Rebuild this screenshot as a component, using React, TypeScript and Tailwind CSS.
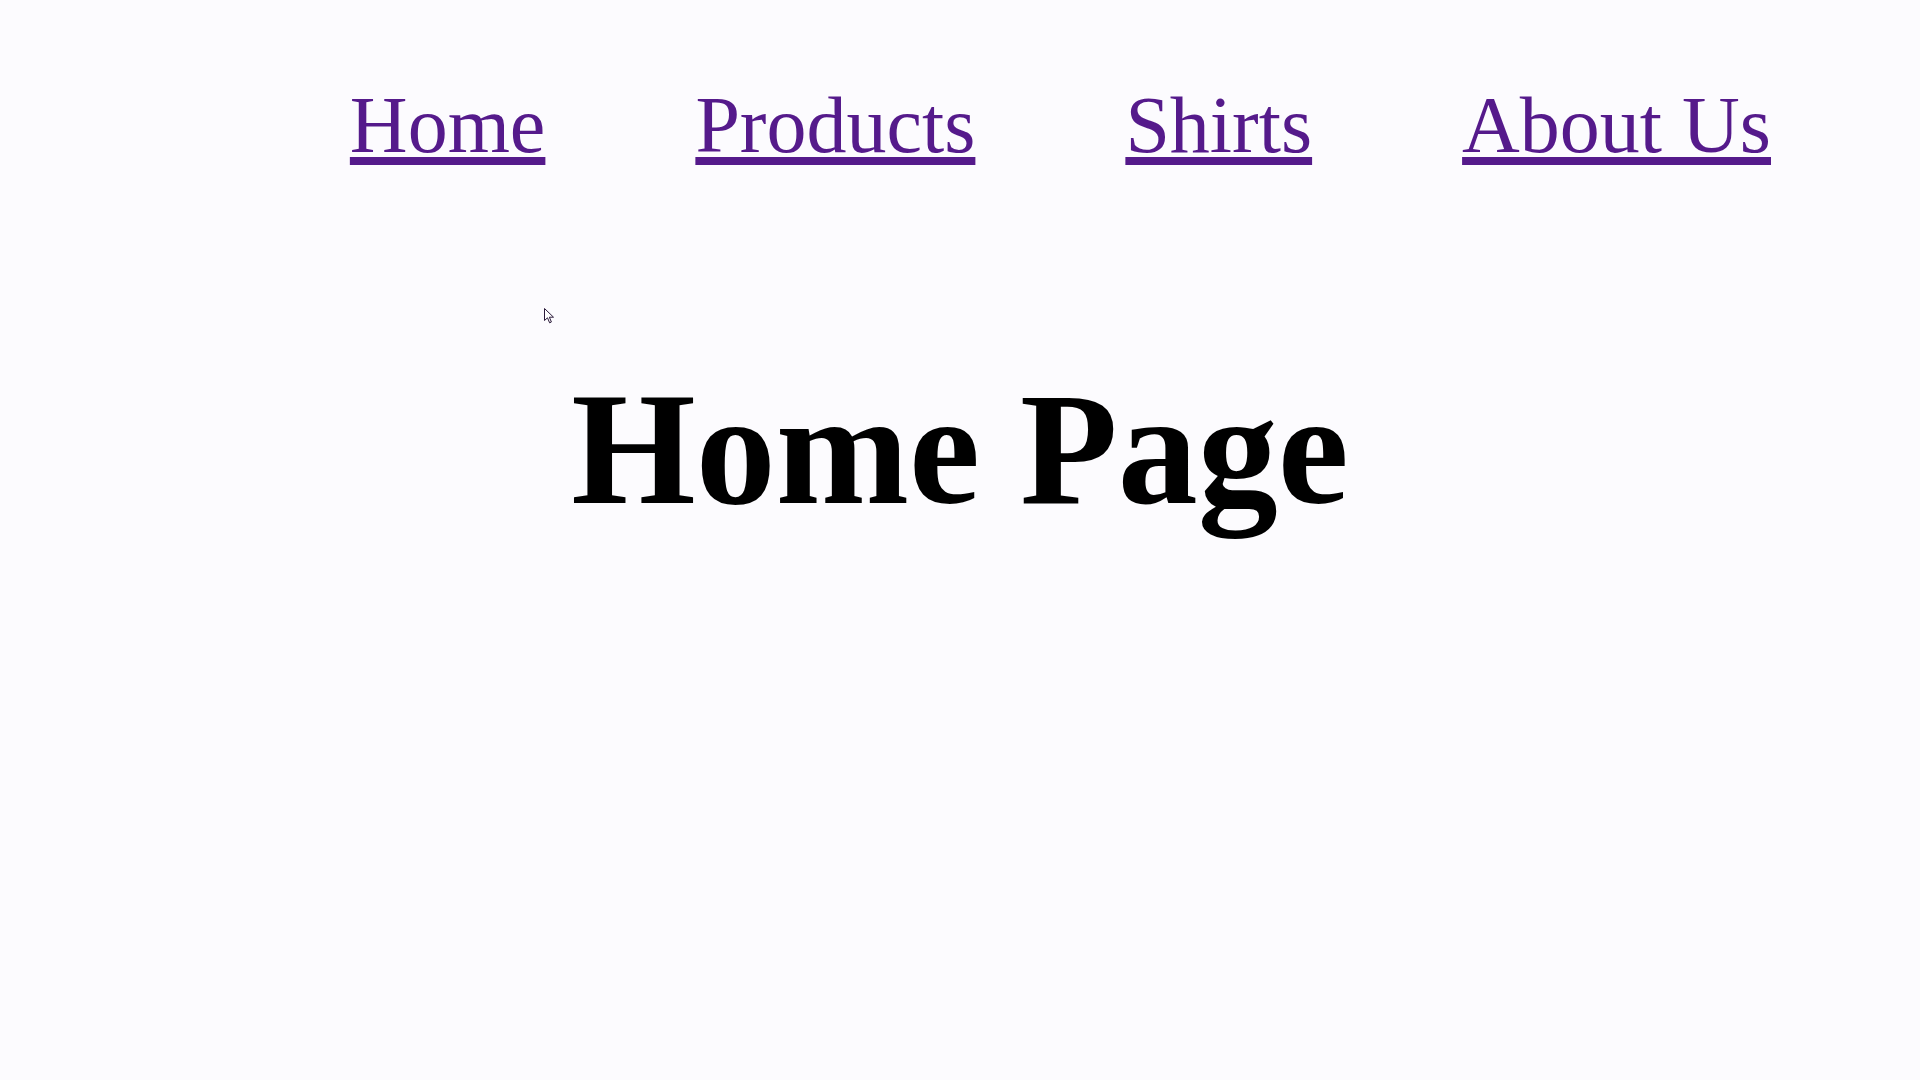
import React from "react";

const links = ["Home", "Products", "Shirts", "About Us"];

export default function App() {
  return (
    <div
      className="relative min-h-screen w-full bg-[#fcfbfe] text-black"
      style={{ fontFamily: '"Liberation Serif", "Times New Roman", serif' }}
    >
      <nav className="flex justify-end gap-[150px] pr-[149px] pt-[79px]">
        {links.map((l) => (
          <a
            key={l}
            href="#"
            className="text-[80px] leading-[92px] text-[#551a8b] underline decoration-[8px] underline-offset-[5px] whitespace-nowrap"
          >
            {l}
          </a>
        ))}
      </nav>
      <h1 className="mt-[186px] text-center text-[160px] font-bold leading-[184px]">
        Home Page
      </h1>
      <svg
        className="absolute left-[544px] top-[308px]"
        width="12"
        height="17"
        viewBox="0 0 12 17"
      >
        <path
          d="M0.5 0.5 L0.5 12.5 L3.5 9.8 L5.6 14.8 L7.4 14 L5.4 9.2 L9.5 9.2 Z"
          fill="#ffffff"
          stroke="#2a1a3a"
          strokeWidth="1"
          strokeLinejoin="miter"
        />
      </svg>
    </div>
  );
}
